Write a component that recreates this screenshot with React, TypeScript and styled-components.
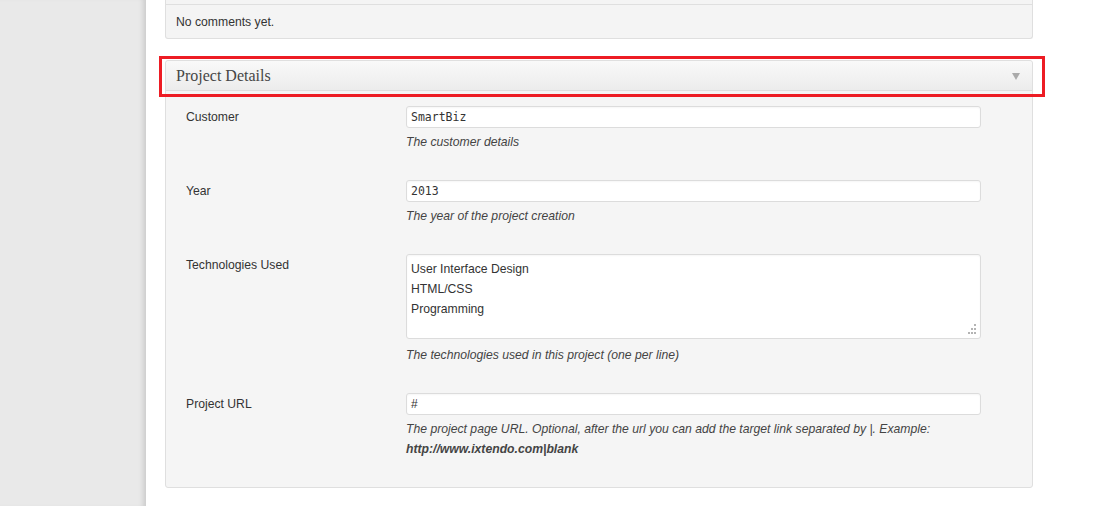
import React from "react";
import styled, { createGlobalStyle } from "styled-components";

const Global = createGlobalStyle`
  html, body { margin: 0; padding: 0; background: #fff; }
  body { font-family: "Liberation Sans", Arial, sans-serif; font-size: 12px; color: #333; }
  * { box-sizing: border-box; }
`;

const Page = styled.div`
  display: flex;
  width: 1120px;
  height: 506px;
  overflow: hidden;
`;

const Sidebar = styled.div`
  width: 146px;
  flex: none;
  background: #e9e9e9;
  box-shadow: inset -6px 0 5px -3px rgba(0, 0, 0, 0.12);
`;

const Main = styled.div`
  flex: 1;
  padding: 0 87px 0 19px;
  display: flex;
  flex-direction: column;
`;

const Card = styled.div`
  border: 1px solid #dfdfdf;
  border-top: none;
  border-radius: 0 0 3px 3px;
  background: #f4f4f4;
`;

const CardTail = styled.div`
  height: 5px;
  border-bottom: 1px solid #dfdfdf;
`;

const CardText = styled.div`
  padding: 2px 10px 0;
  height: 33px;
  line-height: 31px;
  font-size: 12.2px;
  color: #333;
`;

const Box = styled.div`
  position: relative;
  margin-top: 21px;
  border: 1px solid #dfdfdf;
  border-radius: 3px;
  background: #f5f5f5;
`;

const Highlight = styled.div`
  position: absolute;
  top: -5px;
  left: -7px;
  right: -13px;
  height: 41px;
  border: 3px solid #ed1c24;
  pointer-events: none;
`;

const Header = styled.div`
  display: flex;
  align-items: center;
  justify-content: space-between;
  height: 30px;
  padding: 1px 10px 0;
  background: linear-gradient(to bottom, #f9f9f9, #ececec);
  border-bottom: 1px solid #dfdfdf;
  border-radius: 3px 3px 0 0;
`;

const Title = styled.h3`
  margin: 0;
  font-family: "Liberation Serif", Georgia, serif;
  font-weight: normal;
  font-size: 16px;
  color: #464646;
`;

const Arrow = styled.span`
  width: 0;
  height: 0;
  border-left: 4px solid transparent;
  border-right: 4px solid transparent;
  border-top: 7px solid #aaa;
  margin-right: 2px;
`;

const Body = styled.div`
  padding: 15px 20px 28px 20px;
  display: flex;
  flex-direction: column;
  gap: 28px;
`;

const Row = styled.div`
  display: grid;
  grid-template-columns: 220px 575px;
`;

const Label = styled.label`
  line-height: 22px;
  font-size: 12.2px;
  color: #333;
`;

const Field = styled.div`
  display: flex;
  flex-direction: column;
`;

const Input = styled.div<{ $mono?: boolean }>`
  height: 22px;
  line-height: 20px;
  padding: 0 4px;
  background: #fff;
  border: 1px solid #dcdcdc;
  border-radius: 3px;
  box-shadow: inset 0 1px 2px rgba(0, 0, 0, 0.04);
  font-family: ${(p) => (p.$mono ? `"DejaVu Sans Mono", Consolas, monospace` : `"Liberation Sans", Arial, sans-serif`)};
  font-size: ${(p) => (p.$mono ? "11.5px" : "12px")};
  color: #333;
`;

const TextArea = styled.div`
  position: relative;
  height: 85px;
  padding: 4px 4px;
  margin-bottom: 2px;
  background: #fff;
  border: 1px solid #dcdcdc;
  border-radius: 3px;
  box-shadow: inset 0 1px 2px rgba(0, 0, 0, 0.04);
  font-size: 12.2px;
  line-height: 20px;
  color: #333;
`;

const Grip = styled.svg`
  position: absolute;
  right: 3px;
  bottom: 3px;
`;

const Desc = styled.p`
  margin: 4px 0 0;
  font-style: italic;
  font-size: 12.2px;
  line-height: 20px;
  color: #444;
`;

const Strong = styled.strong`
  font-weight: bold;
`;

export default function App() {
  return (
    <Page>
      <Global />
      <Sidebar />
      <Main>
        <Card>
          <CardTail />
          <CardText>No comments yet.</CardText>
        </Card>
        <Box>
          <Highlight />
          <Header>
            <Title>Project Details</Title>
            <Arrow />
          </Header>
          <Body>
            <Row>
              <Label>Customer</Label>
              <Field>
                <Input $mono>SmartBiz</Input>
                <Desc>The customer details</Desc>
              </Field>
            </Row>
            <Row>
              <Label>Year</Label>
              <Field>
                <Input $mono>2013</Input>
                <Desc>The year of the project creation</Desc>
              </Field>
            </Row>
            <Row>
              <Label>Technologies Used</Label>
              <Field>
                <TextArea>
                  User Interface Design
                  <br />
                  HTML/CSS
                  <br />
                  Programming
                  <Grip width="12" height="12" viewBox="0 0 12 12">
                    <g fill="#b4b4b4">
                      <rect x="9" y="1" width="2" height="2" />
                      <rect x="6" y="5" width="2" height="2" />
                      <rect x="9" y="5" width="2" height="2" />
                      <rect x="3" y="9" width="2" height="2" />
                      <rect x="6" y="9" width="2" height="2" />
                      <rect x="9" y="9" width="2" height="2" />
                    </g>
                  </Grip>
                </TextArea>
                <Desc>The technologies used in this project (one per line)</Desc>
              </Field>
            </Row>
            <Row>
              <Label>Project URL</Label>
              <Field>
                <Input>#</Input>
                <Desc>
                  The project page URL. Optional, after the url you can add the target link separated by |. Example:{" "}
                  <Strong>http://www.ixtendo.com|blank</Strong>
                </Desc>
              </Field>
            </Row>
          </Body>
        </Box>
      </Main>
    </Page>
  );
}
